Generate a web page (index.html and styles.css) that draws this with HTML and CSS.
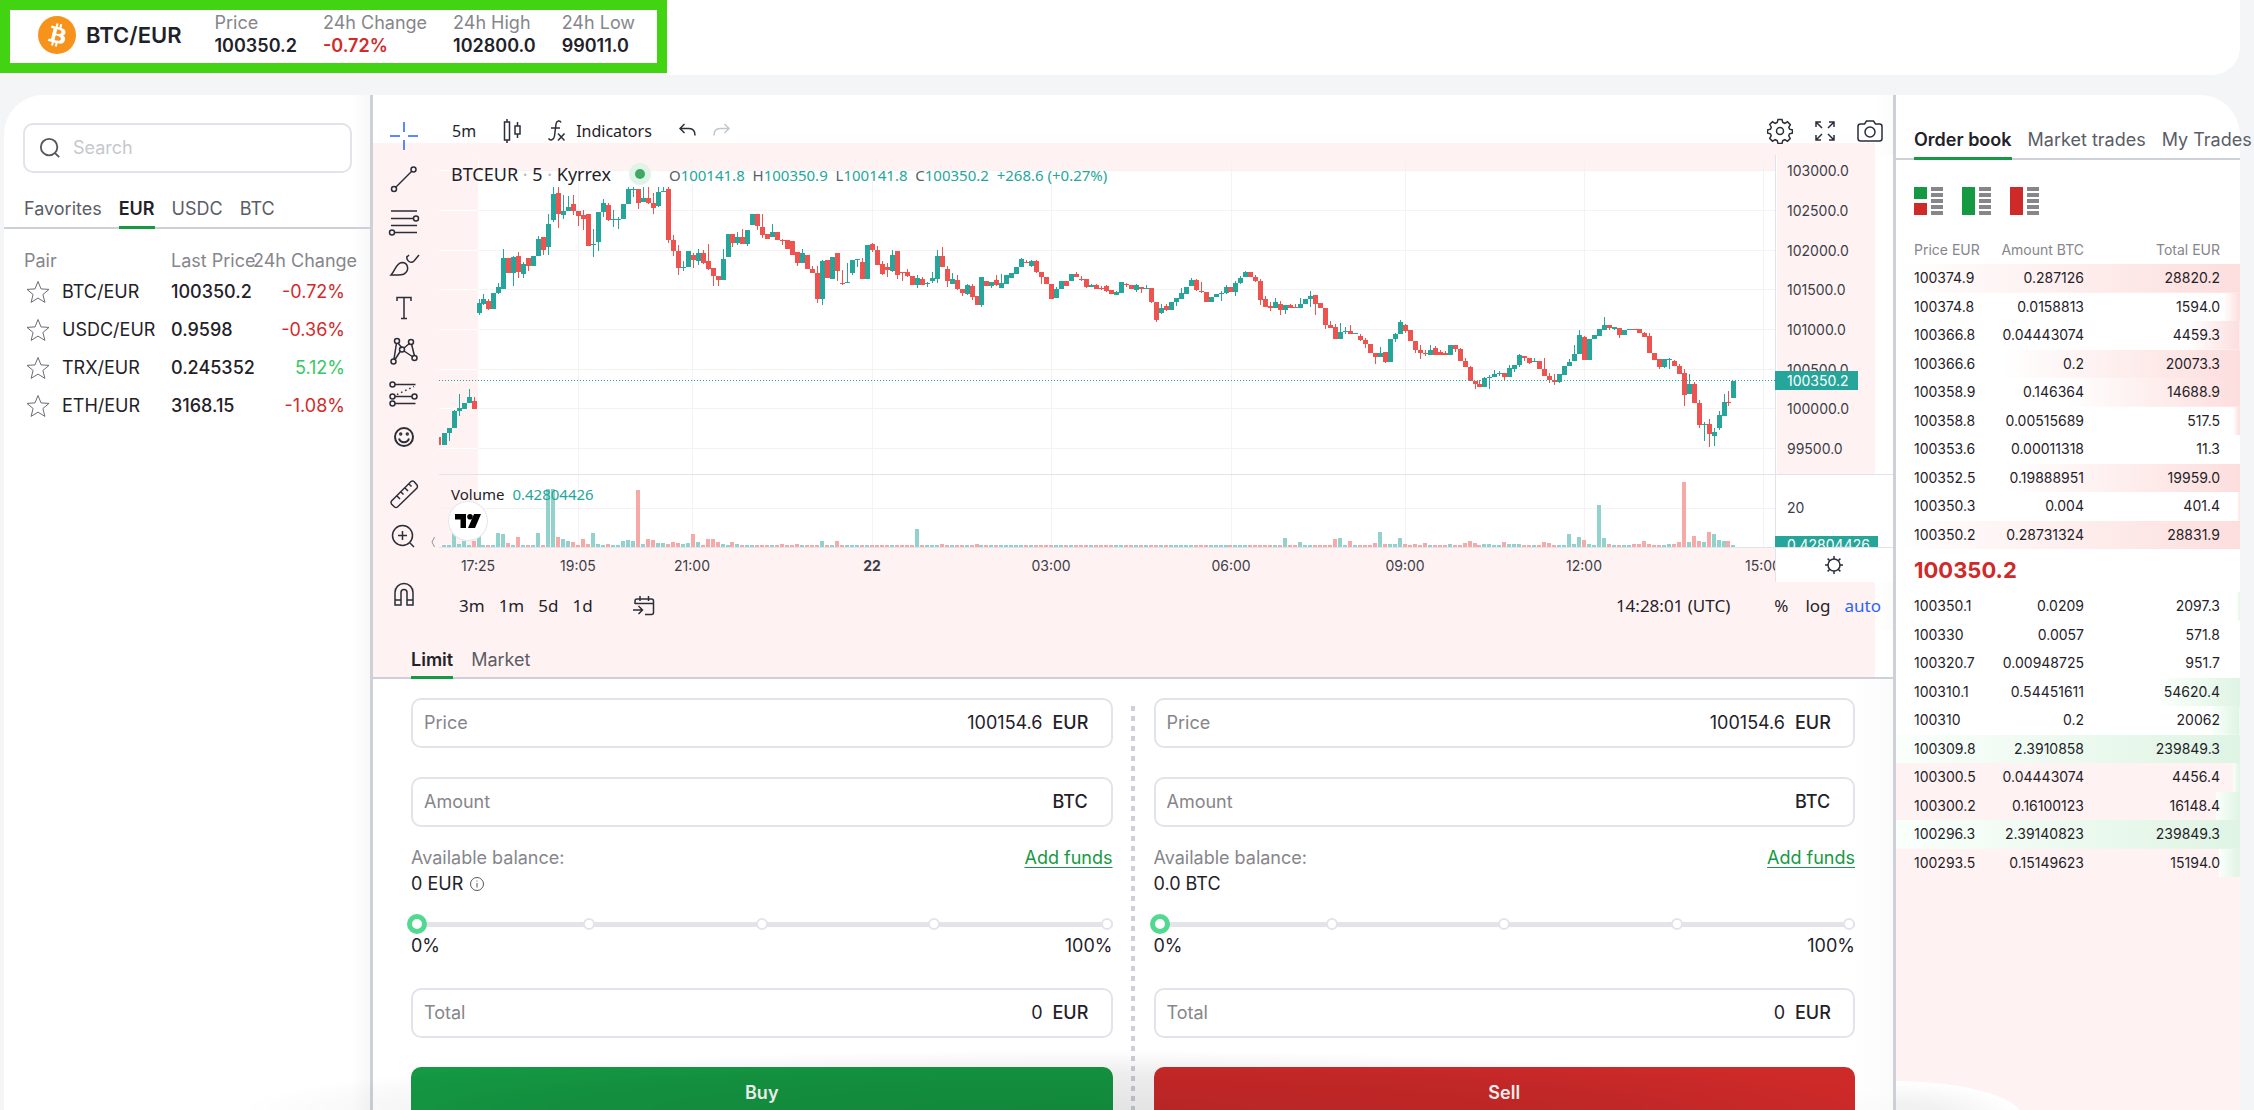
FILE: index.html
```html
<!DOCTYPE html>
<html lang="en">
<head>
<meta charset="utf-8">
<title>BTC/EUR 100350.2</title>
<link rel="stylesheet" href="styles.css">
</head>
<body>
<header class="topbar">
  <div class="ticker">
    <svg class="coin" viewBox="0 0 32 32" aria-hidden="true"><circle cx="16" cy="16" r="16" fill="#f7931a"/><path fill="#fff" d="M23.19 14.02c.31-2.1-1.29-3.23-3.47-3.98l.71-2.84-1.73-.43-.69 2.76c-.45-.11-.92-.22-1.38-.32l.69-2.78-1.73-.43-.7 2.83c-.38-.09-.75-.17-1.1-.26l-2.38-.6-.46 1.85s1.28.3 1.26.31c.7.18.83.64.8 1l-.8 3.24-1.13 4.53c-.09.21-.3.53-.79.41.02.02-1.25-.32-1.25-.32l-.86 1.98 2.25.56c.42.1.83.21 1.23.31l-.71 2.87 1.73.43.7-2.84c.47.13.93.25 1.38.36l-.7 2.82 1.72.43.72-2.86c2.95.55 5.17.33 6.1-2.34.75-2.15-.03-3.38-1.59-4.2 1.13-.26 1.98-1 2.2-2.53zm-3.95 5.54c-.53 2.15-4.15.99-5.32.7l.95-3.8c1.17.29 4.93.87 4.37 3.1zm.54-5.57c-.49 1.95-3.5.96-4.47.71l.86-3.44c.97.24 4.12.7 3.61 2.73z"/></svg>
    <h1 class="pair-name">BTC/EUR</h1>
    <dl class="stats">
      <div><dt>Price</dt><dd>100350.2</dd></div>
      <div><dt>24h Change</dt><dd class="down">-0.72%</dd></div>
      <div><dt>24h High</dt><dd>102800.0</dd></div>
      <div><dt>24h Low</dt><dd>99011.0</dd></div>
    </dl>
  </div>
</header>

<main class="terminal">
  <aside class="markets">
    <label class="search">
      <svg viewBox="0 0 24 24" aria-hidden="true"><circle cx="11" cy="11" r="9"/><path d="M17.500 17.500L22 22"/></svg>
      <input type="search" placeholder="Search" aria-label="Search">
    </label>
    <nav class="tabs market-tabs">
      <button type="button">Favorites</button><button type="button" class="active">EUR</button><button type="button">USDC</button><button type="button">BTC</button>
    </nav>
    <table class="pairs">
      <thead><tr><th>Pair</th><th>Last Price</th><th>24h Change</th></tr></thead>
      <tbody>
        <tr><td><button type="button" class="star" aria-label="Add BTC/EUR to favorites"><svg viewBox="0 0 24 24"><path d="M12 1.500l3 7.400 8 .5-6.100 5.100 2 7.900L12 18.100 5.100 22.400l2-7.900L1 9.400l8-.5z"/></svg></button>BTC/EUR</td><td>100350.2</td><td class="down">-0.72%</td></tr>
        <tr><td><button type="button" class="star" aria-label="Add USDC/EUR to favorites"><svg viewBox="0 0 24 24"><path d="M12 1.500l3 7.400 8 .5-6.100 5.100 2 7.900L12 18.100 5.100 22.400l2-7.900L1 9.400l8-.5z"/></svg></button>USDC/EUR</td><td>0.9598</td><td class="down">-0.36%</td></tr>
        <tr><td><button type="button" class="star" aria-label="Add TRX/EUR to favorites"><svg viewBox="0 0 24 24"><path d="M12 1.500l3 7.400 8 .5-6.100 5.100 2 7.900L12 18.100 5.100 22.400l2-7.900L1 9.400l8-.5z"/></svg></button>TRX/EUR</td><td>0.245352</td><td class="up">5.12%</td></tr>
        <tr><td><button type="button" class="star" aria-label="Add ETH/EUR to favorites"><svg viewBox="0 0 24 24"><path d="M12 1.500l3 7.400 8 .5-6.100 5.100 2 7.900L12 18.100 5.100 22.400l2-7.900L1 9.400l8-.5z"/></svg></button>ETH/EUR</td><td>3168.15</td><td class="down">-1.08%</td></tr>
      </tbody>
    </table>
  </aside>

  <section class="trade">
    <div class="chart">
      <div class="draw-tools">
        <button type="button" aria-label="Cross" class="blue"><svg viewBox="0 0 28 28"><path d="M14 0v10M14 18v10M0 14h10M18 14h10"/></svg></button>
        <button type="button" aria-label="Trend line"><svg viewBox="0 0 28 28"><path d="M5.500 22.500l16-16"/><circle cx="4" cy="24" r="2.500"/><circle cx="23.500" cy="4.500" r="2.500"/></svg></button>
        <button type="button" aria-label="Fib retracement"><svg viewBox="0 0 28 28"><path d="M1 3h26M1 10.500h22.500M1 17.500h26M4 24.500h23"/><circle cx="26" cy="10.500" r="2.500"/><circle cx="2" cy="24.500" r="2.500"/></svg></button>
        <button type="button" aria-label="Brush"><svg viewBox="0 0 28 28"><path d="M1 24C5 20 6 12 12 11.500c6 0 8 8 2 11.500-3 1.500-9 1-13 1zM17 5c-1 5 4 8 7 5l5-6M17 6l2-2"/></svg></button>
        <button type="button" aria-label="Text"><svg viewBox="0 0 28 28"><path d="M7 7V3.500h14V7M14 3.500v21M11 24.500h6"/></svg></button>
        <button type="button" aria-label="Pattern"><svg viewBox="0 0 28 28"><path d="M4 22L6.500 6M8 6l4 5M14 11l6-5M21.500 7l3 12M10.500 14L5 22.500M14 14l9 6"/><circle cx="7" cy="4" r="2.500"/><circle cx="21" cy="5" r="2.500"/><circle cx="12" cy="12.500" r="2.500"/><circle cx="3.500" cy="24.500" r="2.500"/><circle cx="24.500" cy="21" r="2.500"/></svg></button>
        <button type="button" aria-label="Forecast"><svg viewBox="0 0 28 28"><path d="M5 4.500h20.500M5 16.500h17M5 23.500h20.500"/><path d="M7 14.500l17-8" stroke-dasharray="1.500 3"/><circle cx="2.500" cy="4.500" r="2.500"/><circle cx="2.500" cy="16.500" r="2.500"/><circle cx="2.500" cy="23.500" r="2.500"/><circle cx="24.500" cy="16.500" r="2.500"/></svg></button>
        <button type="button" aria-label="Icons" class="bold"><svg viewBox="0 0 28 28"><circle cx="14" cy="14" r="9"/><path d="M9 15.500c1.500 5 8.500 5 10 0"/><circle cx="10.700" cy="11" r=".7"/><circle cx="17.300" cy="11" r=".7"/></svg></button>
        <button type="button" aria-label="Measure" class="apart"><svg viewBox="0 0 28 28"><path d="M1.500 21L21 1.500q1.500-1 3 0l3 3.500q1 1.500 0 3L7.500 27q-1.500 1-3 0L1.500 24q-1-1.500 0-3zM7 16l3 3M11 12l2.500 2.500M15 8l3 3M19 4l2.500 2.500"/></svg></button>
        <button type="button" aria-label="Zoom in"><svg viewBox="0 0 28 28"><circle cx="12.500" cy="12.500" r="10"/><path d="M8 12.500h9M12.500 8v9M20 20l4 4"/></svg></button>
        <button type="button" aria-label="Magnet" class="apart"><svg viewBox="0 0 28 28"><path d="M5 25V12.500a9 9 0 0 1 18 0V25h-6V12.500a3 3 0 0 0-6 0V25zM5 20h6M17 20h6"/></svg></button>
      </div>

      <div class="chart-top">
        <button type="button">5m</button>
        <button type="button" aria-label="Candles"><svg width="18" height="24" viewBox="0 0 18 24"><path d="M4 0v3M4 21v3M1.500 3h5v18h-5zM14.500 3v4M14.500 15v4M12 7h5v8h-5z"/></svg></button>
        <button type="button"><svg width="18" height="24" viewBox="0 0 18 24"><path d="M13 3.500C12 1 8.500 1.500 8 5L6.500 17c-.5 4-4.500 5-6 2.500M3 9h9M10 14.500l6.500 7M16.500 14.500l-6.500 7"/></svg>Indicators</button>
        <div class="history">
          <button type="button" aria-label="Undo"><svg width="18" height="16" viewBox="0 0 18 16"><path d="M5.500 1L1 5.500 5.500 10M1 5.500h9c4 0 6 3 6 7"/></svg></button>
          <button type="button" aria-label="Redo" class="redo"><svg width="18" height="16" viewBox="0 0 18 16"><path d="M12.500 1L17 5.500 12.500 10M17 5.500H8c-4 0-6 3-6 7"/></svg></button>
        </div>
        <div class="view-tools">
          <button type="button" aria-label="Settings"><svg width="26" height="26" viewBox="0 0 26 26"><circle cx="13" cy="13" r="3.500"/><path d="M11 1.500h4l.8 3 2 .8 2.700-1.500 2.800 2.800L21.800 9.300l.8 1.900 2.900.8v3l-3 .8-.8 2 1.500 2.700-2.700 2.700-2.700-1.500-2 .8-.8 3h-4l-.8-3-2-.8-2.700 1.500-2.800-2.800 1.500-2.700-.8-1.900-2.900-.8v-3l3-.8.8-2-1.500-2.700 2.700-2.700 2.700 1.500 2-.8z"/></svg></button>
          <button type="button" aria-label="Full screen"><svg width="20" height="20" viewBox="0 0 20 20"><path d="M1 6V1h5M1 1l6 6M14 1h5v5M19 1l-6 6M1 14v5h5M1 19l6-6M14 19h5v-5M19 19l-6-6"/></svg></button>
          <button type="button" aria-label="Snapshot"><svg width="26" height="22" viewBox="0 0 26 22"><path d="M3.500 4h4l2-3h7l2 3h4q2.500 0 2.500 2.500v12q0 2.500-2.500 2.500h-19Q1 21 1 18.500v-12Q1 4 3.500 4z"/><circle cx="13" cy="12" r="5"/></svg></button>
        </div>
      </div>

      <div class="plot">
        <svg id="plot" class="canvas" aria-label="BTCEUR 5 minute candles"></svg>
        <div class="legend">
          <span class="symbol">BTCEUR <i>·</i> 5 <i>·</i> Kyrrex</span><span class="live"></span>
          <span class="ohlc">O<b>100141.8</b>  H<b>100350.9</b>  L<b>100141.8</b>  C<b>100350.2</b>  <b>+268.6 (+0.27%)</b></span>
        </div>
        <div class="volume-legend">Volume <b>0.42804426</b></div>
        <a class="tv-logo" href="#" aria-label="TradingView"><svg width="26" height="14" viewBox="0 0 26 14"><path d="M0 0h11v14H5.500V5.500H0zM19 0h7l-6 14h-7z"/><circle cx="15" cy="2.800" r="2.800"/></svg></a>
        <button type="button" class="collapse" aria-label="Hide drawing tools"><svg width="4" height="10" viewBox="0 0 4 10"><path d="M3.500 0L1 5l2.500 5"/></svg></button>
      </div>
      <svg id="prices" class="canvas"></svg>
      <svg id="times" class="canvas times"></svg>
      <button type="button" class="axis-gear" aria-label="Axis settings"><svg width="20" height="20" viewBox="0 0 20 20"><circle cx="10" cy="10" r="6"/><path d="M10 1v3M10 16v3M1 10h3M16 10h3M3.600 3.600l2.200 2.200M14.200 14.200l2.200 2.200M3.600 16.400l2.200-2.200M14.200 5.800l2.200-2.200"/></svg></button>

      <div class="chart-bottom">
        <button type="button">3m</button><button type="button">1m</button><button type="button">5d</button><button type="button">1d</button>
        <button type="button" class="goto" aria-label="Go to date"><svg width="22" height="20" viewBox="0 0 22 20"><path d="M2 8V5q0-2 2-2h14.500q2 0 2 2v11.500q0 2-2 2H12M2 7.500h18.500M7 0v5M15.500 0v5M0 14h9M5.500 10L9.500 14l-4 4"/></svg></button>
        <span class="spacer"></span>
        <button type="button">14:28:01 (UTC)</button>
        <button type="button" class="percent">%</button><button type="button">log</button><button type="button" class="auto">auto</button>
      </div>
    </div>

    <nav class="tabs order-tabs"><button type="button" class="active">Limit</button><button type="button">Market</button></nav>

    <div class="orders">
      <form class="order">
        <label class="field">Price<input type="text" value="100154.6"><span>EUR</span></label>
        <label class="field">Amount<input type="text" value=""><span>BTC</span></label>
        <div class="balance"><span class="muted">Available balance:</span><a href="#">Add funds</a></div>
        <div class="funds">0 EUR <svg width="14" height="14" viewBox="0 0 14 14" aria-hidden="true"><circle cx="7" cy="7" r="6.500"/><path d="M7 6v4.500M7 3.500v1"/></svg></div>
        <div class="slider"><input type="range" min="0" max="100" value="0" aria-label="Share of balance to buy with"><span class="stops"><i></i><i></i><i></i><i></i><i></i></span></div>
        <div class="scale"><span>0%</span><span>100%</span></div>
        <label class="field">Total<input type="text" value="0"><span>EUR</span></label>
        <button type="submit" class="submit buy">Buy</button>
      </form>
      <div class="divider"></div>
      <form class="order">
        <label class="field">Price<input type="text" value="100154.6"><span>EUR</span></label>
        <label class="field">Amount<input type="text" value=""><span>BTC</span></label>
        <div class="balance"><span class="muted">Available balance:</span><a href="#">Add funds</a></div>
        <div class="funds">0.0 BTC</div>
        <div class="slider"><input type="range" min="0" max="100" value="0" aria-label="Share of balance to sell"><span class="stops"><i></i><i></i><i></i><i></i><i></i></span></div>
        <div class="scale"><span>0%</span><span>100%</span></div>
        <label class="field">Total<input type="text" value="0"><span>EUR</span></label>
        <button type="submit" class="submit sell">Sell</button>
      </form>
    </div>
  </section>

  <aside class="book">
    <nav class="tabs book-tabs"><button type="button" class="active">Order book</button><button type="button">Market trades</button><button type="button">My Trades</button></nav>
    <div class="views">
      <button type="button" aria-label="Bids and asks"><svg viewBox="0 0 29 28"><path fill="#159943" d="M0 0h13v12H0z"/><path fill="#cf2a2a" d="M0 16h13v12H0z"/><path fill="#86868b" d="M17 0h12v4H17zM17 6h12v4H17zM17 12h12v4H17zM17 18h12v4H17zM17 24h12v4H17z"/></svg></button>
      <button type="button" aria-label="Bids"><svg viewBox="0 0 29 28"><path fill="#159943" d="M0 0h13v28H0z"/><path fill="#86868b" d="M17 0h12v4H17zM17 6h12v4H17zM17 12h12v4H17zM17 18h12v4H17zM17 24h12v4H17z"/></svg></button>
      <button type="button" aria-label="Asks"><svg viewBox="0 0 29 28"><path fill="#cf2a2a" d="M0 0h13v28H0z"/><path fill="#86868b" d="M17 0h12v4H17zM17 6h12v4H17zM17 12h12v4H17zM17 18h12v4H17zM17 24h12v4H17z"/></svg></button>
    </div>
    <table class="levels asks">
      <thead><tr><th>Price EUR</th><th>Amount BTC</th><th>Total EUR</th></tr></thead>
      <tbody>
        <tr style="--depth:100%"><td>100374.9</td><td>0.287126</td><td>28820.2</td></tr>
        <tr style="--depth:5%"><td>100374.8</td><td>0.0158813</td><td>1594.0</td></tr>
        <tr style="--depth:15%"><td>100366.8</td><td>0.04443074</td><td>4459.3</td></tr>
        <tr style="--depth:70%"><td>100366.6</td><td>0.2</td><td>20073.3</td></tr>
        <tr style="--depth:51%"><td>100358.9</td><td>0.146364</td><td>14688.9</td></tr>
        <tr style="--depth:2%"><td>100358.8</td><td>0.00515689</td><td>517.5</td></tr>
        <tr style="--depth:0%"><td>100353.6</td><td>0.00011318</td><td>11.3</td></tr>
        <tr style="--depth:69%"><td>100352.5</td><td>0.19888951</td><td>19959.0</td></tr>
        <tr style="--depth:1%"><td>100350.3</td><td>0.004</td><td>401.4</td></tr>
        <tr style="--depth:100%"><td>100350.2</td><td>0.28731324</td><td>28831.9</td></tr>
      </tbody>
    </table>
    <p class="last-price">100350.2</p>
    <table class="levels bids" aria-label="Bids">
      <tbody>
        <tr style="--depth:1%"><td>100350.1</td><td>0.0209</td><td>2097.3</td></tr>
        <tr style="--depth:0%"><td>100330</td><td>0.0057</td><td>571.8</td></tr>
        <tr style="--depth:0%"><td>100320.7</td><td>0.00948725</td><td>951.7</td></tr>
        <tr style="--depth:23%"><td>100310.1</td><td>0.54451611</td><td>54620.4</td></tr>
        <tr style="--depth:8%"><td>100310</td><td>0.2</td><td>20062</td></tr>
        <tr style="--depth:100%"><td>100309.8</td><td>2.3910858</td><td>239849.3</td></tr>
        <tr style="--depth:2%"><td>100300.5</td><td>0.04443074</td><td>4456.4</td></tr>
        <tr style="--depth:7%"><td>100300.2</td><td>0.16100123</td><td>16148.4</td></tr>
        <tr style="--depth:100%"><td>100296.3</td><td>2.39140823</td><td>239849.3</td></tr>
        <tr style="--depth:6%"><td>100293.5</td><td>0.15149623</td><td>15194.0</td></tr>
      </tbody>
    </table>
    <div class="book-rest"></div>
  </aside>
</main>
<div class="page-shade"></div>
<script src="chart.js"></script>
</body>
</html>
```
FILE: styles.css
```css
* { box-sizing: border-box; }

:root {
  --ink: #1f2229;
  --muted: #86868b;
  --line: #cdd0d7;
  --soft-line: #e2e4ea;
  --pink: #fff2f2;
  --green: #159943;
  --red: #cf2a2a;
}

body {
  margin: 0;
  height: 100vh;
  overflow: hidden;
  display: flex;
  flex-direction: column;
  gap: 20px;
  background: #f4f5f6;
  color: var(--ink);
  font: 18px/24px Inter, "Liberation Sans", sans-serif;
}

button, input { font: inherit; color: inherit; }
button { padding: 0; border: 0; background: none; cursor: pointer; }
table { border-collapse: collapse; }
svg { display: block; }

.down { color: #d42a2a; }
.up { color: #34c966; }
.muted { color: var(--muted); }
.spacer { flex: 1; }

/* Ticker bar */
.topbar {
  flex: none;
  height: 75px;
  margin-right: 14px;
  background: #fff;
  border-radius: 0 0 28px 0;
}
.ticker {
  display: flex;
  align-items: center;
  width: max-content;
  height: 73px;
  padding: 0 22px 4px 28px;
  border: 10px solid #42d413;
}
.coin { width: 38px; height: 38px; }
.pair-name { margin: 0 33px 0 10px; font-size: 22px; line-height: 28px; font-weight: 600; }
.stats { display: flex; gap: 26px; margin: 0; }
.stats dt { color: var(--muted); line-height: 22px; }
.stats dd { margin: 0; font-weight: 600; line-height: 24px; }

/* Page columns */
.terminal {
  flex: 1;
  display: grid;
  grid-template-columns: 369px minmax(0, 1fr) 347px;
  min-height: 0;
  margin: 0 14px 0 4px;
  background: #fff;
  border-radius: 40px 40px 0 0;
}

.tabs { display: flex; border-bottom: 2px solid var(--line); }
.tabs button {
  margin-bottom: -2px;
  padding-bottom: 5px;
  border-bottom: 3px solid transparent;
  color: #5b5d66;
  white-space: nowrap;
}
.tabs .active { border-color: var(--green); color: var(--ink); font-weight: 600; }

/* Markets */
.markets {
  border-right: 3px solid var(--line);
  background: linear-gradient(to left, #f8f8f9, #fff 18px) no-repeat;
  border-radius: 40px 0 0 0;
}
.search {
  display: flex;
  align-items: center;
  gap: 12px;
  height: 50px;
  margin: 28px 18px 0 19px;
  padding: 0 14px;
  border: 2px solid var(--soft-line);
  border-radius: 10px;
  background: #fff;
}
.search svg { width: 22px; height: 22px; fill: none; stroke: #55575f; stroke-width: 2; }
.search input { flex: 1; min-width: 0; border: 0; outline: 0; padding: 0; background: none; }
.search input::placeholder { color: #c6c8ce; }
.market-tabs { gap: 17px; margin-top: 24px; padding-left: 20px; }
.pairs { width: 330px; margin: 20px 0 0 20px; table-layout: fixed; }
.pairs th { padding: 0; height: 24px; color: var(--muted); font-weight: 400; text-align: left; white-space: nowrap; }
.pairs th:nth-child(1) { width: 147px; }
.pairs th:nth-child(2) { width: 82px; }
.pairs td { height: 38px; padding: 0; }
.pairs td:first-child { display: flex; align-items: center; gap: 12px; }
.pairs td:nth-child(2) { font-weight: 500; }
.pairs td:nth-child(3) { padding-right: 9px; text-align: right; }
.star { padding-left: 2px; }
.star svg { width: 24px; height: 24px; fill: none; stroke: #6b6d75; stroke-width: 1; }

/* Chart */
.trade { display: flex; flex-direction: column; min-width: 0; }
.chart {
  display: grid;
  grid-template-columns: 66px minmax(0, 1fr) 118px;
  grid-template-rows: 60px 393px 34px 48px;
  background:
    linear-gradient(to left, #fbfbfb, #fff 18px) right / 18px 100% no-repeat,
    linear-gradient(#fff 48px, var(--pink) 48px);
  font: 17px/24px "Noto Sans", "Open Sans", sans-serif;
}
.chart button svg { fill: none; stroke: #2a2e39; stroke-width: 1.5; }
.draw-tools { grid-row: 1 / 5; padding: 19px 0 0 17px; }
.draw-tools button { display: grid; place-items: center; width: 28px; height: 43px; }
.draw-tools .apart { margin-top: 14px; }
.draw-tools svg { width: 28px; height: 28px; overflow: visible; }
.draw-tools .blue svg { stroke: #2962ff; }
.draw-tools .bold svg { stroke-width: 2; }
.chart-top {
  grid-column: 2 / 4;
  display: flex;
  align-items: center;
  gap: 27px;
  height: 48px;
  padding: 24px 10px 0 13px;
  font-size: 16px;
}
.chart-top button { display: flex; align-items: center; gap: 10px; }
.chart-top .redo svg { stroke: #c4c6cc; }
.history { display: flex; gap: 15px; }
.view-tools { display: flex; align-items: center; gap: 22px; margin-left: auto; }
.canvas { width: 100%; height: 100%; overflow: hidden; font: 14px Inter, sans-serif; fill: #3b3e48; }
.times { text-anchor: middle; }
.plot { position: relative; }
.legend, .volume-legend { position: absolute; left: 12px; display: flex; align-items: center; }
.legend { top: 6px; }
.symbol { font-size: 18px; }
.symbol i { color: #b2b5be; font-style: normal; }
.live { width: 10px; height: 10px; margin: 0 24px; border-radius: 50%; background: #3ea864; box-shadow: 0 0 0 6px #e0f3e7; }
.ohlc { padding-top: 2px; font-size: 15px; color: #5b5e68; white-space: pre; }
.plot b { font-weight: 400; color: #26a69a; }
.volume-legend { top: 327px; gap: 8px; font-size: 15px; }
.tv-logo {
  position: absolute;
  left: 10px;
  top: 347px;
  display: grid;
  place-items: center;
  width: 38px;
  height: 38px;
  border-radius: 50%;
  background: #fff;
  box-shadow: 0 0 0 1px #e6e7ea;
}
.collapse { position: absolute; left: -8px; top: 382px; }
.chart .collapse svg { stroke: #8f929b; stroke-width: 1; }
.axis-gear { display: grid; place-items: center; padding-right: 1px; border-left: 1px solid var(--soft-line); background: #fff; }
.chart-bottom { grid-column: 2 / 4; display: flex; align-items: center; gap: 14px; padding: 0 12px 0 20px; }
.chart-bottom .goto { margin-left: 26px; }
.chart-bottom .percent { margin-left: 30px; }
.chart-bottom .percent + button { margin-left: 3px; }
.chart-bottom .auto { color: #2962ff; }

/* Order forms */
.order-tabs {
  gap: 18px;
  padding: 18px 0 0 38px;
  background: linear-gradient(to left, #fff 18px, var(--pink) 18px);
}
.order-tabs button { padding-bottom: 4px; }
.orders {
  flex: 1;
  display: flex;
  padding: 19px 38px 0 38px;
  background: linear-gradient(to left, #fbfbfb, #fff 40px);
}
.order { flex: 1; min-width: 0; }
.divider {
  width: 4px;
  margin: 8px 19px 0 18px;
  background: repeating-linear-gradient(#cdd0d7 0 5px, transparent 5px 10px);
}
.field {
  display: flex;
  align-items: center;
  gap: 10px;
  height: 50px;
  margin-bottom: 29px;
  padding: 0 22px 0 11px;
  border: 2px solid var(--soft-line);
  border-radius: 10px;
  background: #fff;
  color: var(--muted);
}
.field input { flex: 1; min-width: 0; padding: 0; border: 0; outline: 0; background: none; color: var(--ink); text-align: right; }
.field span { width: 36px; color: var(--ink); font-weight: 500; }
.balance { display: flex; justify-content: space-between; margin-top: -11px; line-height: 26px; }
.balance a { color: var(--green); text-underline-offset: 3px; }
.funds { display: flex; align-items: center; gap: 7px; line-height: 25px; }
.funds svg { fill: none; stroke: #55575f; }
.slider { position: relative; height: 20px; margin: 18px -4px 0 -4px; }
.slider input { position: relative; z-index: 1; display: block; width: 100%; height: 20px; margin: 0; appearance: none; background: none; }
.slider input::-webkit-slider-thumb {
  appearance: none;
  width: 20px;
  height: 20px;
  border: 5px solid #52d890;
  border-radius: 50%;
  background: #fff;
}
.stops {
  position: absolute;
  inset: 4px;
  display: flex;
  justify-content: space-between;
  background: linear-gradient(var(--soft-line), var(--soft-line)) center / 100% 5px no-repeat;
}
.stops i { width: 12px; height: 12px; border: 2px solid var(--soft-line); border-radius: 50%; background: #fff; }
.scale { display: flex; justify-content: space-between; margin-bottom: 30px; }
.submit { width: 100%; height: 52px; border-radius: 10px; color: #fff; font-weight: 600; }
.buy { background: var(--green); }
.sell { background: var(--red); }

/* Order book */
.book { display: flex; flex-direction: column; min-width: 0; border-left: 3px solid var(--line); }
.book-tabs { gap: 16px; margin-top: 33px; padding-left: 18px; }
.views { display: flex; gap: 19px; padding: 27px 18px 20px 18px; }
.views svg { width: 29px; height: 28px; }
.levels { width: 100%; table-layout: fixed; font-size: 14px; line-height: 20px; text-align: right; }
.levels th { height: 29px; padding: 0; font-weight: 400; color: var(--muted); }
.levels td { padding: 0; }
.levels th:first-child, .levels td:first-child { width: 78px; padding-left: 18px; text-align: left; white-space: nowrap; }
.levels th:nth-child(2), .levels td:nth-child(2) { width: 110px; }
.levels th:last-child, .levels td:last-child { padding-right: 20px; }
.asks { height: 314px; }
.bids { height: 285px; }
.levels tbody tr { background: linear-gradient(to left, var(--deep), var(--pale)) right / var(--depth) 100% no-repeat; }
.asks { --deep: #fcdedd; --pale: #fff; }
.bids { --deep: #dff4e4; --pale: #fafffb; }
.bids tr:nth-child(n+7) { background-color: var(--pink); }
.last-price { margin: 0; padding-left: 18px; color: var(--red); font-size: 22px; line-height: 43px; font-weight: 700; }
.book-rest {
  flex: 1;
  background: radial-gradient(ellipse 128px 38px at 0 100%, #f1f1f1 40%, #fff 99%, transparent) no-repeat, var(--pink);
}

.page-shade {
  position: fixed;
  inset: auto 340px 0 240px;
  height: 60px;
  pointer-events: none;
  background: radial-gradient(ellipse 50% 100% at 50% 100%, rgba(0, 0, 0, .11), rgba(0, 0, 0, .07) 60%, transparent);
}
```
FILE: chart.js
```js
// Candles from 17:25 on, five minutes apart: "colour top bottom [high low]".
// Levels are thirds of a pixel, counted from 55px above the plot.
const FIRST = -7;
const CANDLES = `g 999 1034,g 985 1000 985 1022,g 934 983 930 983,g 925 934 882 948,g 908 926,g 892 910 866 910,r 902 926 890 926,
g 610 640 597 646,g 597 611 583 615,r 602 626 597 631,g 580 626,g 562 580 549 582,g 474 566 447 568,r 474 519,g 471 519 468 557,r 468 516 456 534,g 492 522 487 535,
r 473 499 473 512,g 468 499,g 416 468 409 468,r 411 450 411 466,g 372 440 341 464,g 282 360 262 365,r 279 342 262 385,g 332 346 284 356,g 320 333 287 333,r 311 332 284 345,
r 332 349 332 378,r 345 358 330 390,r 341 437,g 433 436 388 471,g 337 427 337 452,g 310 337 297 352,r 315 360 310 362,g 357 359 330 380,g 357 359 352 386,g 311 358,
g 268 311 262 311,g 268 271 262 290,r 268 308 268 326,g 293 307 262 307,r 294 309 262 311,r 309 323 280 342,g 276 318 262 320,g 274 277 262 277,r 268 421 262 428,r 420 454 404 468,
r 453 503 436 524,g 500 504 483 514,g 452 501,r 465 481 460 503,g 460 483 447 495,r 459 490 449 492,r 483 507 432 509,r 504 527 504 557,r 528 539 528 557,g 476 539 446 541,
g 402 472,r 402 430 402 442,g 411 430 397 436,r 411 431 388 433,g 389 431 389 438,g 343 374,r 343 379 343 390,r 380 404 341 414,r 402 418,g 396 411 372 411,
r 395 421,r 420 424 418 436,r 420 448,r 424 466,r 456 489 456 497,g 460 489 446 489,r 465 508,r 508 518 498 520,r 518 598 497 610,g 483 597 480 615,
r 479 535,g 470 536,r 459 513 459 543,r 548 553 511 556,g 545 547 489 549,g 480 519 480 526,g 477 479 477 501,r 486 538 475 538,g 436 536,r 432 451 430 455,
r 450 495 438 495,r 493 522 484 526,r 502 509 489 530,g 465 514 450 516,r 454 524 454 538,r 515 517 515 543,r 515 528 508 530,r 529 555,g 534 556 526 563,r 537 554 532 556,
g 548 553 546 562,g 534 544 517 549,g 467 537 450 549,r 467 500 442 502,r 507 543 498 560,g 537 551 519 553,r 540 567 526 569,r 567 579 567 588,g 555 583 552 585,r 557 590 552 600,
r 588 614,g 532 614 530 620,r 544 558,g 545 559 545 564,r 541 555 526 557,g 550 563 522 563,g 525 551,g 518 533,g 502 521,g 477 500 474 502,
r 486 488 480 488,g 483 499 480 501,r 484 516 480 518,r 517 531 517 552,r 531 552,r 551 598,g 566 594 560 594,g 544 567,r 543 557,g 522 543,
r 522 531 517 531,r 537 539 528 543,r 538 562 538 564,g 554 560 552 560,r 555 566 552 566,r 563 566 557 570,r 559 572 555 576,r 570 583,g 576 585 574 586,g 547 578,
r 551 555 549 560,r 554 567,g 555 569 552 576,r 562 566 562 579,g 563 566 554 566,r 565 606 563 608,r 606 660 606 667,g 624 640 612 643,r 619 631 611 633,g 605 631,
g 594 607 594 618,g 579 597 563 597,g 560 581,g 540 557 534 557,r 540 570 537 573,r 573 576 545 578,r 575 605,g 590 605,g 582 592,g 579 582 573 602,
g 561 580 555 581,r 561 577,g 548 575 544 588,g 533 550 528 552,g 517 532 514 532,r 516 531,r 531 542 526 546,r 543 599 537 616,r 598 620 589 621,r 618 625 607 632,
g 607 624 594 624,r 612 630 603 646,g 615 630 615 643,r 614 623 612 623,r 620 623 612 624,g 611 623 594 623,g 597 611,g 587 598 574 620,r 586 611 586 646,r 609 625,
r 625 676 625 686,r 675 683 663 684,r 681 717 672 717,g 696 717 670 717,g 693 696 681 702,r 693 702 675 702,g 699 701,r 709 720 702 724,r 719 732 715 744,r 732 760,
r 760 771 758 792,g 758 771 741 771,r 756 786 756 790,g 716 786,g 702 716 699 726,g 666 702 661 702,r 674 692 672 699,r 691 723,r 724 750 724 759,r 749 760 736 776,
r 759 762 750 768,g 750 764 736 764,r 744 764 739 764,r 757 764 750 764,r 758 764 753 764,g 736 764,r 736 746 736 757,r 747 783 744 783,r 783 802 774 802,r 801 843 797 843,
r 843 853 843 866,r 853 861 841 861,g 835 861 830 861,g 831 834 826 866,g 821 831 810 831,g 819 821 814 827,r 819 831 819 843,g 805 832 796 832,g 795 807 795 815,g 764 795 762 800,
r 769 773 767 783,r 774 790 774 793,g 782 787 774 787,r 782 808,r 806 829 773 829,r 828 841 820 848,r 839 845 823 854,g 823 846 823 849,g 797 824,g 785 797 776 797,
g 761 783 736 783,g 705 761 689 761,r 711 780 707 780,g 717 780,g 705 716,g 687 707,g 675 689 651 689,r 675 685 675 691,g 682 686 682 690,r 683 705 683 713,
g 689 705,g 687 689,r 687 689,r 688 699,r 699 711 696 711,r 708 760 698 760,r 759 780,r 778 800 778 807,g 778 800 778 803,g 777 779 775 807,
r 783 799 779 799,r 798 821 792 821,r 819 884 807 919,g 852 882 821 882,r 852 910 847 910,r 909 975 900 983,g 971 974 967 1022,r 971 1002 957 1041,g 995 1009 983 1038,g 945 984 932 990,
g 906 947 882 949,r 905 908 873 917,g 843 893`.split(',');

// Volume bar heights that stand out, same unit, by candle number.
const VOLUMES = {};
`-7:6 -5:55 -4:10 -3:17 -1:18 0:60 1:7 4:43 5:40 6:12 8:30 12:43 14:175 15:175 16:29 17:25 18:17 19:16 20:6 21:23 22:8 23:43 24:10 25:6 26:10 27:6 28:6 29:17 30:22 31:19 32:172 33:9 34:25 35:22 36:13 37:13 38:9 39:15 40:13 41:9 42:13 43:40 44:16 45:7 46:25 47:23 48:15 49:10 50:6 51:16 52:9 53:6 61:9 64:9 69:17 70:7 71:7 72:17 78:7 80:7 88:53 93:9 100:8 147:7 162:27 165:15 167:6 168:7 170:7 172:25 173:27 175:17 177:7 179:7 180:12 181:45 182:9 183:9 184:8 185:27 186:9 188:9 189:6 190:12 194:7 195:9 197:7 198:12 199:17 200:12 202:10 203:10 204:7 205:7 206:15 207:8 208:10 209:8 214:16 215:13 217:7 219:40 220:8 221:31 222:22 223:9 224:6 225:126 226:26 227:8 232:9 233:10 234:18 235:9 239:9 240:8 241:15 242:196 243:15 244:32 245:17 246:14 247:46 248:40 249:22 250:17 251:19`
  .split(/\s+/).forEach(p => { const [i, h] = p.split(':'); VOLUMES[i] = +h; });

const TIMES = [[39, '17:25'], [139, '19:05'], [253, '21:00'], [433, '22'], [612, '03:00'], [792, '06:00'], [966, '09:00'], [1145, '12:00'], [1324, '15:00']];
const PRICES = [[15, '103000.0'], [55, '102500.0'], [95, '102000.0'], [134, '101500.0'], [174, '101000.0'], [214, '100500.0'], [253, '100000.0'], [293, '99500.0']];
const GRID = '#f3f3f4', EDGE = '#e0e3eb';

const rect = (x, y, w, h, fill) => `<rect x="${x}" y="${y}" width="${w}" height="${h}" fill="${fill}"/>`;

let s = rect(39, 15, 2000, 378, '#fff');
for (const [x] of TIMES) s += rect(x, 4, 1, 388, x > 40 ? GRID : '#fff');
for (const [y] of PRICES) s += rect(0, y, 39, 1, '#fff') + rect(39, y, 2000, 1, GRID);
s += rect(0, 353, 2000, 1, GRID) + rect(0, 319, 2000, 1, EDGE) + rect(0, 392, 2000, 1, EDGE);
CANDLES.forEach((row, n) => {
  const [c, ...v] = row.trim().split(' ');
  const [top, bottom, high = top, low = bottom] = v.map(k => Math.round(k / 3) - 55);
  const i = n + FIRST, x = Math.round(39.5 + i * 4.98);
  const vol = Math.max(Math.round((VOLUMES[i] || 4) / 3), 2);
  const up = c === 'g';
  s += rect(x - 2, 392 - vol, 4, vol, up ? '#92d2cc' : '#f7a9a7');
  s += rect(x, high, 1, Math.max(low - high, 1), up ? '#26a69a' : '#ef5350');
  s += rect(x - 2, top, 5, Math.max(bottom - top, 1), up ? '#26a69a' : '#ef5350');
});
s += rect(0, 282, 2, 8, '#ef5350');
s += '<path d="M0 225.500H2000" stroke="#26a69a" stroke-dasharray="1 2"/>';
document.getElementById('plot').innerHTML = s;

let p = rect(101, 0, 20, 320, '#fff') + rect(0, 320, 118, 73, '#fff') + rect(0, 0, 2, 393, '#fff') + rect(0, 0, 1, 393, EDGE) + rect(0, 319, 118, 1, EDGE);
for (const [y, label] of PRICES) p += `<text x="12" y="${y + 6}">${label}</text>`;
p += '<text x="12" y="358">20</text>';
p += rect(0, 216, 83, 19, '#26a69a') + '<text x="12" y="231" fill="#fff">100350.2</text>';
p += rect(0, 381, 103, 11, '#26a69a') + '<text x="12" y="395" fill="#fff">0.42804426</text>';
p += rect(0, 392, 118, 1, EDGE);
document.getElementById('prices').innerHTML = p;

document.getElementById('times').innerHTML = TIMES
  .map(([x, label]) => `<text x="${x}" y="23"${label === '22' ? ' font-weight="700"' : ''}>${label}</text>`).join('');
```
